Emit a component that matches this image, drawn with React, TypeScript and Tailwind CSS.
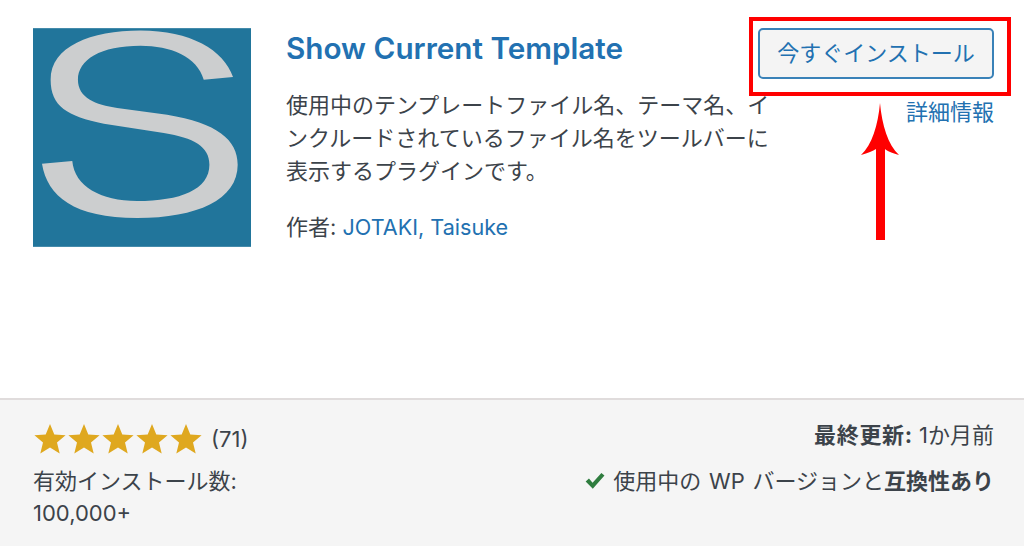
const font = { fontFamily: 'Inter, "Noto Sans CJK JP", sans-serif' };

function Logo() {
  return (
    <svg viewBox="97 85 655 657" className="w-[218px] h-[219px] shrink-0 block">
      <rect x="97" y="85" width="655" height="657" fill="#21759b" />
      <path
        fill="#cccecf"
        d="M698 232 L610 240 C590 170 510 138 420 138 C300 138 232 180 232 240 C232 295 285 315 350 325 L500 345 C650 370 712 420 712 495 C712 600 590 655 410 655 C220 655 140 590 124 492 L215 484 C222 560 300 604 410 604 C540 604 627 570 627 495 C627 440 580 415 490 400 L310 372 C200 350 150 320 150 240 C150 140 270 92 420 92 C570 92 670 150 698 232 Z"
      />
    </svg>
  );
}

function Star() {
  return (
    <svg viewBox="0 0 34 34" className="w-[34px] h-[34px] block">
      <polygon
        fill="#dfa81f"
        points="17,2 21.3,12.4 32.6,13.2 24,20.4 26.7,31.4 17,25.4 7.3,31.4 10,20.4 1.4,13.2 12.7,12.4"
      />
    </svg>
  );
}

export default function App() {
  return (
    <div className="relative w-[1024px] h-[546px] overflow-hidden bg-white text-[22px] text-[#3c434a]" style={font}>
      <div className="h-[398px] flex pl-[33px] pr-[30px] pt-[28px]">
        <Logo />
        <div className="ml-[35px] w-[488px] mr-[-16px] shrink-0">
          <h3 className="text-[29.7px] leading-[40px] font-semibold text-[#2271b1]">Show Current Template</h3>
          <p className="mt-[21px] leading-[33px]">
            使用中のテンプレートファイル名、テーマ名、インクルードされているファイル名をツールバーに表示するプラグインです。
          </p>
          <p className="mt-[23px] leading-[33px]">
            作者: <span className="text-[21.6px] text-[#2271b1]">JOTAKI, Taisuke</span>
          </p>
        </div>
        <div className="relative ml-auto flex flex-col items-end">
          <button className="w-[236px] h-[51px] rounded-[5px] border-2 border-[#3a82b8] bg-[#f4f4f4] text-[#2271b1]">
            今すぐインストール
          </button>
          <span className="mt-[17px] leading-[33px] text-[#2271b1]">詳細情報</span>
        </div>
      </div>
      <div className="h-[148px] border-t-2 border-[#e0dcdc] bg-[#f5f5f5] flex justify-between pl-[33px] pr-[30px] pt-[22px]">
        <div>
          <div className="flex items-center h-[34px]">
            <Star />
            <Star />
            <Star />
            <Star />
            <Star />
            <span className="ml-[8px]">(71)</span>
          </div>
          <div className="mt-[9px] leading-[32px]">
            有効インストール数:
            <br />
            100,000+
          </div>
        </div>
        <div className="flex flex-col items-end">
          <div className="leading-[32.7px] mt-[-3px]">
            <strong className="font-bold tracking-[0.7px]">最終更新:</strong> 1か月前
          </div>
          <div className="mt-[13px] leading-[32.7px] flex items-center">
            <svg viewBox="0 0 20 20" className="w-[22px] h-[22px] mr-[7px]">
              <path fill="#2f7d3f" d="M1.5 10.5 L4.5 7.8 L7.8 11.5 L15.8 2.8 L18.6 5 L8 17 Z" />
            </svg>
            <span className="[word-spacing:1.5px]">
              使用中の WP バージョンと<strong className="font-bold">互換性あり</strong>
            </span>
          </div>
        </div>
      </div>
      <div className="absolute left-[749px] top-[17px] w-[262px] h-[79px] border-[4px] border-[#ff0000]" />
      <svg className="absolute left-[855px] top-[100px]" width="50" height="145" viewBox="0 0 50 145">
        <path
          fill="#ff0000"
          d="M25 3 C27 25 33 45 44 55 C37 53 32 51 30 49 L30 140 L21 140 L21 49 C18 51 13 53 6 55 C17 45 23 25 25 3 Z"
        />
      </svg>
    </div>
  );
}
